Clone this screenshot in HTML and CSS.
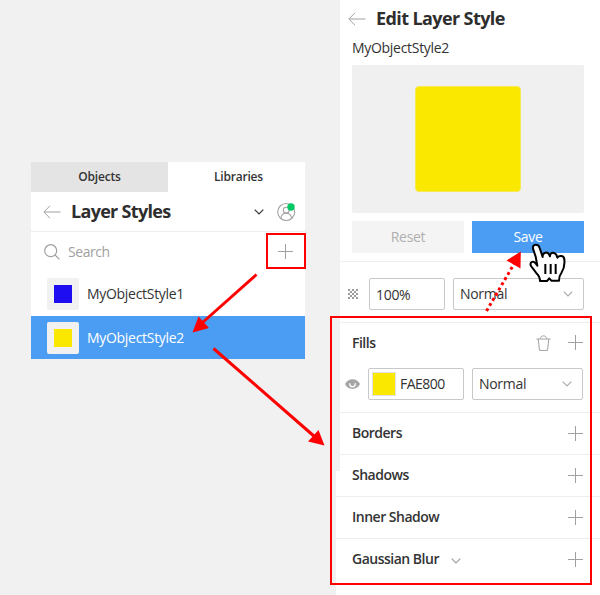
FILE: index.html
```html
<!DOCTYPE html>
<html lang="en">
<head>
<meta charset="utf-8">
<title>Edit Layer Style</title>
<link rel="stylesheet" href="styles.css">
</head>
<body>
<svg class="defs" width="0" height="0">
  <symbol id="plus" viewBox="0 0 15 15"><path d="M7.5 0V15M0 7.5H15"/></symbol>
  <symbol id="back" viewBox="0 0 18 14"><path d="M17.5 7H1M7 .8L.8 7L7 13.2"/></symbol>
  <symbol id="chevron" viewBox="0 0 10 6"><path d="M.7 .7L5 5L9.300 .7"/></symbol>
</svg>
<aside class="library">
  <nav class="tabs"><div class="tab tab-muted">Objects</div><div class="tab">Libraries</div></nav>
  <header class="library-head">
    <svg class="icon back"><use href="#back"/></svg>
    <h2>Layer Styles</h2>
    <svg class="icon chevron dark"><use href="#chevron"/></svg>
    <svg class="icon avatar" viewBox="0 0 20 20"><circle cx="9.200" cy="10" r="8.500"/><circle cx="9.200" cy="8.200" r="2.900"/><path d="M3.800 16C4.400 12.700 6.500 11.200 9.200 11.200S14 12.700 14.600 16"/><circle class="online" cx="14" cy="5" r="3.700"/></svg>
  </header>
  <div class="search">
    <svg class="icon lens" viewBox="0 0 16 16"><circle cx="6.700" cy="6.700" r="6"/><path d="M11 11L15.400 15.400"/></svg>
    <span class="search-text">Search</span>
    <svg class="icon plus"><use href="#plus"/></svg>
  </div>
  <div class="item"><span class="thumb"><i class="chip blue"></i></span><span class="name">MyObjectStyle1</span></div>
  <div class="item selected"><span class="thumb"><i class="chip"></i></span><span class="name">MyObjectStyle2</span></div>
</aside>
<main class="editor">
  <header class="editor-head"><svg class="icon back"><use href="#back"/></svg><h2>Edit Layer Style</h2></header>
  <div class="style-name">MyObjectStyle2</div>
  <div class="preview"><div class="shape"></div></div>
  <div class="buttons"><div class="button">Reset</div><div class="button primary">Save</div></div>
  <div class="blend">
    <svg class="checker" viewBox="0 0 10 10"><path d="M0 0h2v2h-2zM4 0h2v2h-2zM8 0h2v2h-2zM2 2h2v2h-2zM6 2h2v2h-2zM0 4h2v2h-2zM4 4h2v2h-2zM8 4h2v2h-2zM2 6h2v2h-2zM6 6h2v2h-2zM0 8h2v2h-2zM4 8h2v2h-2zM8 8h2v2h-2z"/></svg>
    <div class="field opacity">100%</div>
    <div class="field mode">Normal<svg class="icon chevron"><use href="#chevron"/></svg></div>
  </div>
  <section class="fills">
    <div class="row"><h3>Fills</h3>
      <svg class="icon trash" viewBox="0 0 15 16"><path d="M.5 4H14.500M2.200 4L3.500 15.400H11.500L12.800 4M4.600 3.500C4.600 1.700 5.500 .9 7.500 .9S10.400 1.700 10.400 3.500"/></svg>
      <svg class="icon plus"><use href="#plus"/></svg></div>
    <div class="fill-row">
      <svg class="eye" viewBox="0 0 15 10"><path class="lid" d="M0 5C3-1.500 12-1.500 15 5C12 11.500 3 11.500 0 5Z"/><path class="iris" d="M4.800 4.300A2.800 2.800 0 1 0 10.200 4.300"/></svg>
      <div class="field color"><i class="swatch"></i><span>FAE800</span></div>
      <div class="field fill-mode">Normal<svg class="icon chevron"><use href="#chevron"/></svg></div>
    </div>
  </section>
  <section class="row"><h3>Borders</h3><svg class="icon plus"><use href="#plus"/></svg></section>
  <section class="row step"><h3>Shadows</h3><svg class="icon plus"><use href="#plus"/></svg></section>
  <section class="row wide"><h3>Inner Shadow</h3><svg class="icon plus"><use href="#plus"/></svg></section>
  <section class="row wide last"><h3>Gaussian Blur</h3><svg class="icon chevron"><use href="#chevron"/></svg><svg class="icon plus"><use href="#plus"/></svg></section>
</main>
<svg class="callouts" viewBox="0 0 600 595">
  <g class="lines">
    <path d="M267 234H305V268H267Z"/><path d="M331 317H591V584H331Z"/>
    <path class="arrow" d="M256.500 274.500L202 323"/><path class="arrow" d="M213.500 348.500L315 437"/>
    <path class="arrow dotted" d="M486.500 311L514 264"/>
  </g>
  <path class="head" d="M192.500 332.500L198.500 316.500L209 328ZM324.500 445.500L308 441.500L318.500 430ZM520.800 251.500L506.500 260.500L520.500 268.500Z"/>
  <g class="hand" transform="translate(460 180) scale(.33333)">
    <path d="M219 206C216 192 235 190 239 204L248 231C247 216 264 212 270 229C270 214 288 214 292 233C297 225 313 226 313 239C315 256 311 268 304 279C297 288 297 293 297 302H274L268 295L261 303H240C240 291 235 284 228 278L213 258C208 246 220 239 229 253L232 257L227 230Z"/>
    <path d="M256 252V282M272 252V282M287 252V282"/>
  </g>
</svg>
</body>
</html>
```

FILE: styles.css
```css
* { box-sizing: border-box; }
body { margin: 0; position: relative; display: flex; width: 600px; height: 595px; overflow: hidden; background: #f1f1f1; color: #333; font-family: "Open Sans", "Noto Sans", sans-serif; font-size: 14px; line-height: 20px; letter-spacing: -.3px; }
.defs { position: absolute; }
h2, h3 { margin: 0; }
h2 { font-size: 18px; font-weight: 700; line-height: 24px; letter-spacing: -.65px; color: #2e2e2e; padding-bottom: 1px; }
h3 { font-size: 14px; font-weight: 600; line-height: 20px; letter-spacing: -.5px; }
.icon { display: block; flex: none; fill: none; stroke: #a0a0a0; stroke-width: 1; }
.plus { width: 15px; height: 15px; margin-left: auto; }
.back { width: 18px; height: 14px; }
.chevron { width: 10px; height: 6px; stroke-width: 1.2; }
.dark { stroke: #333; }

.library { width: 274px; height: 197px; margin: 162px 35px 0 31px; flex: none; background: #fff; }
.tabs { display: flex; height: 30px; }
.tab { flex: 1; line-height: 30px; text-align: center; font-size: 12px; font-weight: 600; letter-spacing: -.2px; padding-left: 4px; }
.tab-muted { flex-grow: 1.03; background: #e4e4e4; padding-left: 0; }
.library-head { display: flex; align-items: center; height: 40px; padding: 0 8px 0 12px; border-bottom: 1px solid #eee; }
.library-head h2 { margin-left: 10px; letter-spacing: -.7px; }
.library-head .chevron { margin-left: auto; }
.avatar { width: 20px; height: 20px; margin-left: 13px; stroke-width: 1.1; }
.online { fill: #00c864; stroke: none; }
.search { display: flex; align-items: center; height: 40px; padding: 0 12px 0 13px; }
.search .plus { margin-bottom: 1px; }
.lens { width: 16px; height: 16px; stroke-width: 1.2; }
.search-text { margin-left: 8px; color: #a0a0a0; letter-spacing: -.45px; }
.item { display: flex; align-items: center; height: 44px; padding-left: 16px; }
.item.selected { height: 43px; background: #4a9df3; color: #fff; }
.thumb { display: grid; place-items: center; width: 32px; height: 32px; border-radius: 2px; background: #f1f1f1; }
.chip { width: 18px; height: 18px; background: #fae800; }
.blue { background: #1d0df0; }
.name { margin-left: 8px; }

.editor { width: 260px; flex: none; background: #fff; }
.editor-head { display: flex; align-items: center; height: 38px; padding: 0 0 1px 8px; }
.editor-head h2 { margin-left: 10px; letter-spacing: -.6px; }
.style-name { height: 27px; padding-left: 12px; }
.preview { display: grid; place-items: center; width: 232px; height: 148px; margin-left: 12px; border-radius: 2px; background: #f0f0f0; }
.shape { width: 106px; height: 106px; border-radius: 4px; background: #fae800; border: 1px solid #f7ea50; }
.buttons { display: flex; gap: 8px; height: 49px; padding: 8px 16px 8px 12px; border-bottom: 1px solid #eee; }
.button { flex: 1; height: 32px; line-height: 32px; text-align: center; background: #f4f4f4; color: #afafaf; }
.primary { background: #4a9df3; color: #fff; }
.blend { display: flex; align-items: center; height: 60px; padding: 4px 16px 0 8px; }
.checker { width: 10px; height: 10px; fill: #9c9c9c; }
.field { display: flex; align-items: center; height: 32px; border: 1px solid #c9c9c9; border-radius: 2px; padding: 0 10px 0 6px; background: #fff; }
.field .chevron { margin-left: auto; stroke: #aaa; }
.opacity { width: 76px; margin-left: 11px; padding-top: 2px; }
.mode { width: 131px; margin-left: 8px; }
.fills { height: 90px; border-top: 1px solid #eee; }
.row { display: flex; align-items: center; height: 42px; padding: 0 17px 1px 12px; border-top: 1px solid #eee; }
.row .plus { position: relative; }
.fills .row { border: 0; height: 40px; }
.trash { width: 15px; height: 16px; margin-left: auto; }
.trash + .plus { margin-left: 17px; }
.fill-row { display: flex; align-items: center; margin-top: 5px; padding-left: 5px; }
.eye { width: 15px; height: 10px; }
.lid { fill: #a5a5a5; }
.iris { fill: none; stroke: #fff; stroke-width: 1.4; }
.color { width: 96px; margin-left: 8px; padding: 0 3px; }
.swatch { width: 24px; height: 24px; border: 1px solid #e2e2e2; background: #fae800; }
.color span { margin-left: 4px; letter-spacing: -.5px; }
.fill-mode { width: 111px; margin-left: 8px; }
.step { position: relative; }
.step::before { content: ""; position: absolute; left: -4px; bottom: 0; width: 4px; height: 25px; background: #fff; }
.wide { margin-left: -4px; padding-left: 16px; background: #fff; }
.last { height: 57px; padding-bottom: 16px; }
.last .chevron { margin: 3px 0 0 12px; }

.callouts { position: absolute; left: 0; top: 0; width: 600px; height: 595px; }
.lines { fill: none; stroke: #f00; stroke-width: 2; }
.arrow { stroke-width: 3; }
.dotted { stroke-dasharray: 3 3; }
.head { fill: #f00; }
.hand { fill: #fff; stroke: #000; stroke-width: 6; stroke-linejoin: round; }
```
